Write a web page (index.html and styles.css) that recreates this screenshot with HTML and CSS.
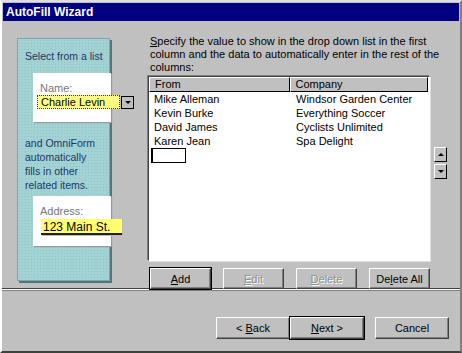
FILE: index.html
```html
<!DOCTYPE html>
<html lang="en">
<head>
    <meta charset="UTF-8">
    <title>AutoFill Wizard</title>
    <link rel="stylesheet" href="styles.css">
</head>
<body>
    <div class="window">
        <div class="titlebar">AutoFill Wizard</div>

        <div class="main">
            <div class="side">
                <p class="side-text">Select from a list</p>
                <div class="card">
                    <div class="card-label">Name:</div>
                    <div class="combo">
                        <span class="combo-field">Charlie Levin</span>
                        <span class="combo-btn"><span class="tri-down"></span></span>
                    </div>
                </div>
                <p class="side-text side-text-2">and OmniForm automatically fills in other related items.</p>
                <div class="card card-addr">
                    <div class="card-label">Address:</div>
                    <div class="addr-field">123 Main St.</div>
                </div>
            </div>

            <div class="content">
                <p class="intro">Specify the value to show in the drop down list in the first column and the data to automatically enter in the rest of the columns:</p>
                <div class="list-row">
                    <div class="listbox">
                        <div class="list-head">
                            <div class="col-from">From</div>
                            <div class="col-company">Company</div>
                        </div>
                        <div class="list-item"><span class="col-from">Mike Alleman</span><span class="col-company">Windsor Garden Center</span></div>
                        <div class="list-item"><span class="col-from">Kevin Burke</span><span class="col-company">Everything Soccer</span></div>
                        <div class="list-item"><span class="col-from">David James</span><span class="col-company">Cyclists Unlimited</span></div>
                        <div class="list-item"><span class="col-from">Karen Jean</span><span class="col-company">Spa Delight</span></div>
                        <div class="edit-cell"></div>
                    </div>
                    <div class="movers">
                        <span class="small-btn"><span class="tri-up"></span></span>
                        <span class="small-btn"><span class="tri-down"></span></span>
                    </div>
                </div>
                <div class="list-buttons">
                    <button class="btn btn-default"><u>A</u>dd</button>
                    <button class="btn" disabled><u>E</u>dit</button>
                    <button class="btn" disabled><u>D</u>elete</button>
                    <button class="btn">De<u>l</u>ete All</button>
                </div>
            </div>
        </div>

        <div class="divider"></div>

        <div class="footer">
            <button class="btn btn-nav">&lt; <u>B</u>ack</button>
            <button class="btn btn-nav btn-default"><u>N</u>ext &gt;</button>
            <button class="btn btn-nav btn-cancel">Cancel</button>
        </div>
    </div>
</body>
</html>
```

FILE: styles.css
```css
body {
    margin: 0;
    background-color: #c0c0c0;
    font-family: "Liberation Sans", Arial, sans-serif;
    font-size: 11px;
    color: #000;
}
.window {
    width: 462px;
    height: 353px;
    box-sizing: border-box;
    border-left: 2px solid #fff;
    border-top: 2px solid #dfdfdf;
    border-right: 2px solid #808080;
    border-bottom: 2px solid #404040;
    background-color: #c0c0c0;
    overflow: hidden;
}
.titlebar {
    margin: 1px 1px 0 1px;
    height: 18px;
    line-height: 18px;
    padding-left: 3px;
    background-color: #000080;
    color: #fff;
    font-weight: bold;
    font-size: 12px;
}
.main {
    display: flex;
    height: 260px;
}

/* left illustration */
.side {
    margin: 17px 0 0 15px;
    width: 93px;
    height: 243px;
    box-sizing: border-box;
    background-color: #a2d2d4;
    background-image: radial-gradient(#8fc4c6 0.6px, transparent 0.8px);
    background-size: 3px 3px;
    border: 1px solid #7aa8aa;
    box-shadow: 2px 2px 0 #557577;
    color: #1d3868;
    padding-left: 7px;
    font-size: 10.5px;
}
.side-text {
    margin: 11px 0 0 0;
    line-height: 13px;
}
.side-text-2 {
    margin-top: 14px;
    width: 72px;
    line-height: 14px;
}
.card {
    margin-top: 10px;
    margin-left: 8px;
    width: 78px;
    height: 49px;
    box-sizing: border-box;
    background-color: #fff;
    padding: 9px 0 0 7px;
    box-shadow: 1px 1px 1px #999;
    font-size: 11px;
}
.card-label {
    color: #777;
    line-height: 12px;
}
.combo {
    display: flex;
    align-items: center;
    margin-left: -3px;
    margin-top: 1px;
}
.combo-field {
    flex-shrink: 0;
    white-space: nowrap;
    width: 83px;
    height: 14px;
    line-height: 13px;
    box-sizing: border-box;
    background-color: #ffff80;
    border: 1px dotted #333;
    padding-left: 3px;
    color: #000;
}
.combo-btn {
    flex-shrink: 0;
    width: 11px;
    height: 11px;
    margin-left: 1px;
    background-color: #c0c0c0;
    border: 1px solid #000;
    display: flex;
    justify-content: center;
    align-items: center;
}
.card-addr {
    margin-top: 4px;
    height: 50px;
    padding-top: 9px;
}
.addr-field {
    margin-left: 1px;
    margin-top: 2px;
    width: 81px;
    height: 16px;
    line-height: 16px;
    box-sizing: border-box;
    background-color: #ffff70;
    border-bottom: 2px solid #222;
    padding-left: 2px;
    font-size: 12px;
    white-space: nowrap;
    color: #000;
    box-shadow: 1px 1px 0 #bbb;
}

/* right side */
.content {
    margin-left: 38px;
    width: 300px;
}
.intro {
    margin: 14px 0 0 2px;
    width: 292px;
    line-height: 13px;
}
.intro::first-letter {
    text-decoration: underline;
}
.list-row {
    display: flex;
    align-items: flex-start;
}
.listbox {
    margin-top: 2px;
    width: 282px;
    height: 185px;
    box-sizing: border-box;
    background-color: #fff;
    border-top: 1px solid #404040;
    border-left: 1px solid #404040;
    border-right: 1px solid #fff;
    border-bottom: 1px solid #fff;
    box-shadow: -1px -1px 0 #808080, 1px 1px 0 #dfdfdf;
}
.list-head {
    display: flex;
    height: 15px;
    margin: 0 1px 0 0;
}
.list-head div {
    box-sizing: border-box;
    background-color: #c0c0c0;
    border-top: 1px solid #fff;
    border-left: 1px solid #fff;
    border-right: 1px solid #000;
    border-bottom: 1px solid #000;
    line-height: 13px;
    padding-left: 5px;
}
.list-head .col-from {
    width: 141px;
}
.list-head .col-company {
    width: 139px;
}
.list-item {
    display: flex;
    line-height: 14px;
}
.list-item .col-from {
    width: 141px;
    padding-left: 5px;
    box-sizing: border-box;
}
.list-item .col-company {
    padding-left: 6px;
}
.edit-cell {
    margin: 0 0 0 2px;
    width: 35px;
    height: 15px;
    box-sizing: border-box;
    border: 1px solid #000;
    border-left-width: 2px;
}
.movers {
    display: flex;
    flex-direction: column;
    gap: 2px;
    margin: 73px 0 0 4px;
}
.small-btn {
    width: 13px;
    height: 15px;
    box-sizing: border-box;
    background-color: #c0c0c0;
    border-top: 1px solid #fff;
    border-left: 1px solid #fff;
    border-right: 1px solid #000;
    border-bottom: 1px solid #000;
    display: flex;
    justify-content: center;
    align-items: center;
}
.tri-down {
    width: 0;
    height: 0;
    border-left: 3px solid transparent;
    border-right: 3px solid transparent;
    border-top: 3px solid #000;
}
.tri-up {
    width: 0;
    height: 0;
    border-left: 3px solid transparent;
    border-right: 3px solid transparent;
    border-bottom: 3px solid #000;
}

/* buttons */
.btn {
    font-family: "Liberation Sans", Arial, sans-serif;
    font-size: 11px;
    color: #000;
    background-color: #c0c0c0;
    height: 21px;
    padding: 0;
    box-sizing: border-box;
    border-top: 1px solid #fff;
    border-left: 1px solid #fff;
    border-right: 1px solid #404040;
    border-bottom: 1px solid #404040;
    box-shadow: inset -1px -1px 0 #808080;
}
.btn:disabled {
    color: #909090;
    text-shadow: 1px 1px 0 #fff;
}
.btn-default {
    outline: 1px solid #000;
}
.list-buttons {
    display: flex;
    gap: 12px;
    margin: 7px 0 0 2px;
}
.list-buttons .btn {
    width: 61px;
}
.divider {
    margin-top: 7px;
    height: 1px;
    background-color: #404040;
    border-bottom: 1px solid #fff;
    box-shadow: 0 1px 0 #808080;
}
.footer {
    display: flex;
    justify-content: flex-end;
    margin: 27px 11px 0 0;
}
.btn-nav {
    width: 74px;
    height: 22px;
}
.btn-cancel {
    margin-left: 11px;
}
```
